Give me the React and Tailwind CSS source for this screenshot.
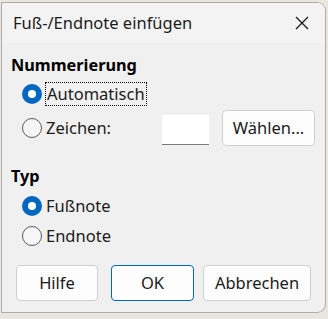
import React from "react";

const Radio = ({ checked }) =>
  checked ? (
    <span className="w-[20px] h-[20px] rounded-full bg-[#0067c0] flex items-center justify-center shrink-0">
      <span className="w-[8px] h-[8px] rounded-full bg-white" />
    </span>
  ) : (
    <span className="w-[20px] h-[20px] rounded-full border border-[#5a5a5a] bg-[#f6f6f6] shrink-0" />
  );

const Button = ({ children, primary, className = "" }) => (
  <div
    className={`h-[36px] flex items-center justify-center rounded-[4px] bg-[#fdfdfd] text-[16.5px] text-[#1b1b1b] border ${
      primary ? "border-[#0067c0]" : "border-[#d0d0d0]"
    } ${className}`}
  >
    {children}
  </div>
);

export default function App() {
  return (
    <div
      className="w-[328px] h-[319px] bg-[#e9e6df] overflow-hidden pt-[3px] pl-[2px]"
      style={{ fontFamily: '"Noto Sans", "Open Sans", sans-serif' }}
    >
      <div className="w-[323px] h-[309px] bg-[#f0f0f0] rounded-[8px] rounded-tl-none rounded-bl-none shadow-[0_0_0_1px_rgba(0,0,0,0.25)] flex flex-col overflow-hidden">
        <div className="h-[40px] bg-[#f3f3f3] flex items-center justify-between pl-[11px] pr-[15px]">
          <span className="text-[16.5px] text-[#1b1b1b]">Fuß-/Endnote einfügen</span>
          <svg width="14" height="14" viewBox="0 0 14 14" className="mr-[1px]">
            <path d="M1 1 L13 13 M13 1 L1 13" stroke="#1b1b1b" strokeWidth="1.3" fill="none" />
          </svg>
        </div>

        <div className="flex flex-col px-[9px] pt-[12px]">
          <div className="text-[16.3px] font-bold text-black leading-[20px]">Nummerierung</div>

          <div className="flex items-center h-[26px] mt-[6px] pl-[11px] gap-[3px]">
            <Radio checked />
            <span className="text-[16.5px] text-[#1b1b1b] border border-dotted border-black px-[1px] leading-[22px]">
              Automatisch
            </span>
          </div>

          <div className="flex items-center h-[36px] mt-[3px] pl-[11px]">
            <Radio />
            <span className="text-[16.5px] text-[#1b1b1b] ml-[4px] w-[116px]">Zeichen:</span>
            <div className="w-[47px] h-[30px] bg-white border-b border-[#7a7a7a] mt-[3px]" />
            <Button className="w-[93px] ml-[13px]">Wählen...</Button>
          </div>

          <div className="text-[16.3px] font-bold text-black leading-[20px] mt-[20px]">Typ</div>

          <div className="flex items-center h-[26px] mt-[7px] pl-[11px] gap-[4px]">
            <Radio checked />
            <span className="text-[16.5px] text-[#1b1b1b]">Fußnote</span>
          </div>
          <div className="flex items-center h-[26px] mt-[4px] pl-[11px] gap-[4px]">
            <Radio />
            <span className="text-[16.5px] text-[#1b1b1b]">Endnote</span>
          </div>

          <div className="flex mt-[16px] pl-[5px]">
            <Button className="w-[82px]">Hilfe</Button>
            <Button primary className="w-[83px] ml-[13px]">OK</Button>
            <Button className="w-[108px] ml-[9px]">Abbrechen</Button>
          </div>
        </div>
      </div>
    </div>
  );
}
